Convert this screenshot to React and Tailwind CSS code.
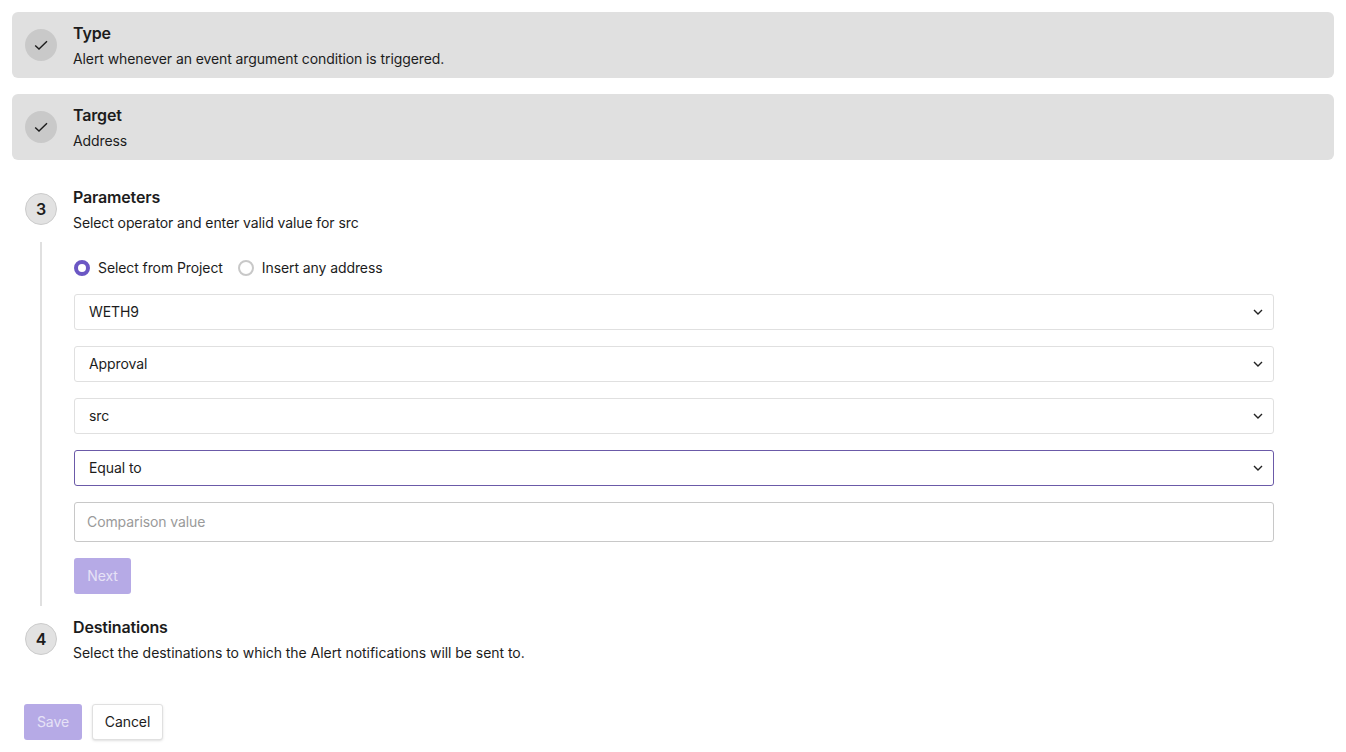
import React from "react";

const font = { fontFamily: "Inter, sans-serif" };

const Check = () => (
  <svg width="16" height="16" viewBox="0 0 16 16" fill="none">
    <path d="M2.2 8.4 L6 12 L14 4.2" stroke="#1c1c1c" strokeWidth="1.4" />
  </svg>
);

const Chevron = () => (
  <svg width="10" height="6" viewBox="0 0 10 6" fill="none" className="shrink-0">
    <path d="M1 1 L5 5 L9 1" stroke="#222222" strokeWidth="1.4" />
  </svg>
);

const StepHeader = ({ icon, title, text, done, wide }) => (
  <div className={`flex items-center gap-4 rounded-md px-[13px] h-[66px] ${done ? "bg-[#e0e0e0]" : ""}`}>
    {done ? (
      <div className="flex items-center justify-center w-8 h-8 rounded-full bg-[#c9c9c9]">{icon}</div>
    ) : (
      <div className="flex items-center justify-center w-8 h-8 rounded-full bg-[#e2e2e2] border border-[#cccccc] text-base font-semibold text-[#1c1c1c]">
        {icon}
      </div>
    )}
    <div className="flex flex-col gap-[2px] pt-[2px]">
      <div className="text-base leading-6 font-semibold tracking-[-0.17px] text-[#1c1c1c]">{title}</div>
      <div className={`text-sm leading-6 text-[#1c1c1c] ${wide ? "tracking-[-0.05px]" : ""}`}>{text}</div>
    </div>
  </div>
);

const Select = ({ label, focus }) => (
  <div
    className={`flex items-center justify-between h-9 pl-[14px] pr-[10px] rounded-[3px] border bg-white text-sm text-[#1c1c1c] ${
      focus ? "border-[#6b5aa8]" : "border-[#e0e0e0]"
    }`}
  >
    <span>{label}</span>
    <Chevron />
  </div>
);

export default function App() {
  return (
    <div className="bg-white h-[752px] overflow-hidden p-3 tracking-[-0.09px]" style={font}>
      <div className="flex flex-col gap-4">
        <StepHeader done icon={<Check />} title="Type" text="Alert whenever an event argument condition is triggered." />
        <StepHeader done icon={<Check />} title="Target" text="Address" />
      </div>

      <div className="mt-4">
        <StepHeader icon="3" title="Parameters" text="Select operator and enter valid value for src" />
        <div className="ml-7 border-l-2 border-[#e0e0e0] pl-8 pt-4 pb-3 w-[1234px]">
          <div className="flex items-center gap-[15px] h-5 text-sm text-[#1c1c1c]">
            <label className="flex items-center gap-2">
              <span className="w-4 h-4 rounded-full border-[4px] border-[#6b57c4] bg-white" />
              Select from Project
            </label>
            <label className="flex items-center gap-2">
              <span className="w-4 h-4 rounded-full border-2 border-[#c8c8c8] bg-white" />
              Insert any address
            </label>
          </div>
          <div className="flex flex-col gap-4 mt-4">
            <Select label="WETH9" />
            <Select label="Approval" />
            <Select label="src" />
            <Select label="Equal to" focus />
            <input
              placeholder="Comparison value"
              className="h-10 px-3 pb-[2px] rounded-[3px] border border-[#c8c8c8] text-sm tracking-[-0.09px] outline-none placeholder:text-[#9a9a9a]"
            />
          </div>
          <button className="block mt-4 h-9 w-[57px] rounded-[3px] bg-[#b6aae6] text-sm text-[#e6e2f6]">Next</button>
        </div>
        <StepHeader wide icon="4" title="Destinations" text="Select the destinations to which the Alert notifications will be sent to." />
      </div>

      <div className="flex gap-[10px] mt-8 ml-3">
        <button className="h-9 w-[58px] rounded-[3px] bg-[#b6aae6] text-sm text-[#e6e2f6]">Save</button>
        <button className="h-9 w-[71px] rounded-[3px] border border-[#e0e0e0] bg-white text-sm text-[#1c1c1c] shadow-sm">Cancel</button>
      </div>
    </div>
  );
}
